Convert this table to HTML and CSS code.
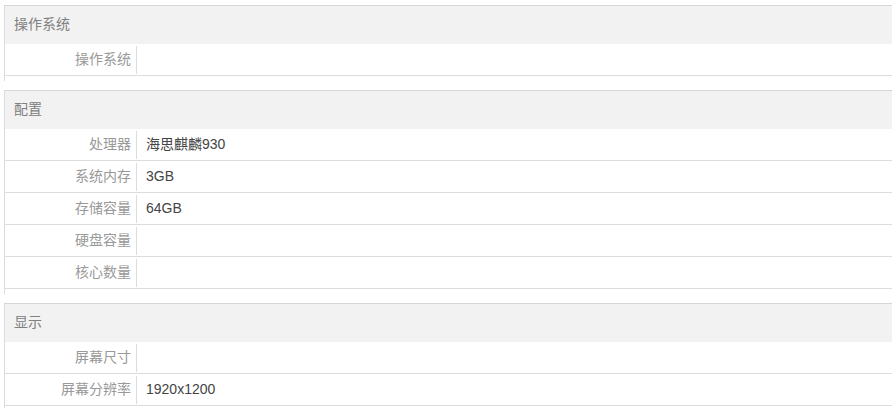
FILE: index.html
```html
<!DOCTYPE html>
<html lang="zh">
<head>
<meta charset="utf-8">
<title>参数</title>
<link rel="stylesheet" href="styles.css">
</head>
<body>
<div class="specs">
  <div class="section">
    <div class="section-title">操作系统</div>
    <div class="row"><div class="label">操作系统</div><div class="value"></div></div>
  </div>
  <div class="section">
    <div class="section-title">配置</div>
    <div class="row"><div class="label">处理器</div><div class="value">海思麒麟930</div></div>
    <div class="row"><div class="label">系统内存</div><div class="value">3GB</div></div>
    <div class="row"><div class="label">存储容量</div><div class="value">64GB</div></div>
    <div class="row"><div class="label">硬盘容量</div><div class="value"></div></div>
    <div class="row"><div class="label">核心数量</div><div class="value"></div></div>
  </div>
  <div class="section">
    <div class="section-title">显示</div>
    <div class="row"><div class="label">屏幕尺寸</div><div class="value"></div></div>
    <div class="row"><div class="label">屏幕分辨率</div><div class="value">1920x1200</div></div>
  </div>
</div>
</body>
</html>
```

FILE: styles.css
```css
html, body {
  margin: 0;
  padding: 0;
  background: #fff;
}
body {
  font-family: "Liberation Sans", "Noto Sans CJK SC", sans-serif;
  font-size: 14px;
  color: #333;
}
.specs {
  padding: 5px 0 0 4px;
}
.section {
  border-left: 1px solid #dcdcdc;
  border-top: 1px solid #d6d6d6;
  padding-bottom: 5px;
  margin-bottom: 9px;
}
.section-title {
  box-sizing: border-box;
  height: 38px;
  line-height: 36px;
  padding-bottom: 2px;
  background: #f2f2f2;
  padding-left: 9px;
  color: #808080;
  font-size: 14px;
}
.row {
  display: flex;
  align-items: center;
  height: 31px;
  border-bottom: 1px solid #dcdcdc;
}
.label {
  box-sizing: border-box;
  width: 132px;
  height: 28px;
  line-height: 26px;
  padding-bottom: 2px;
  padding-right: 5px;
  text-align: right;
  border-right: 1px solid #dcdcdc;
  color: #999;
}
.value {
  padding-left: 9px;
  line-height: 26px;
  padding-bottom: 2px;
  color: #444;
}
```
